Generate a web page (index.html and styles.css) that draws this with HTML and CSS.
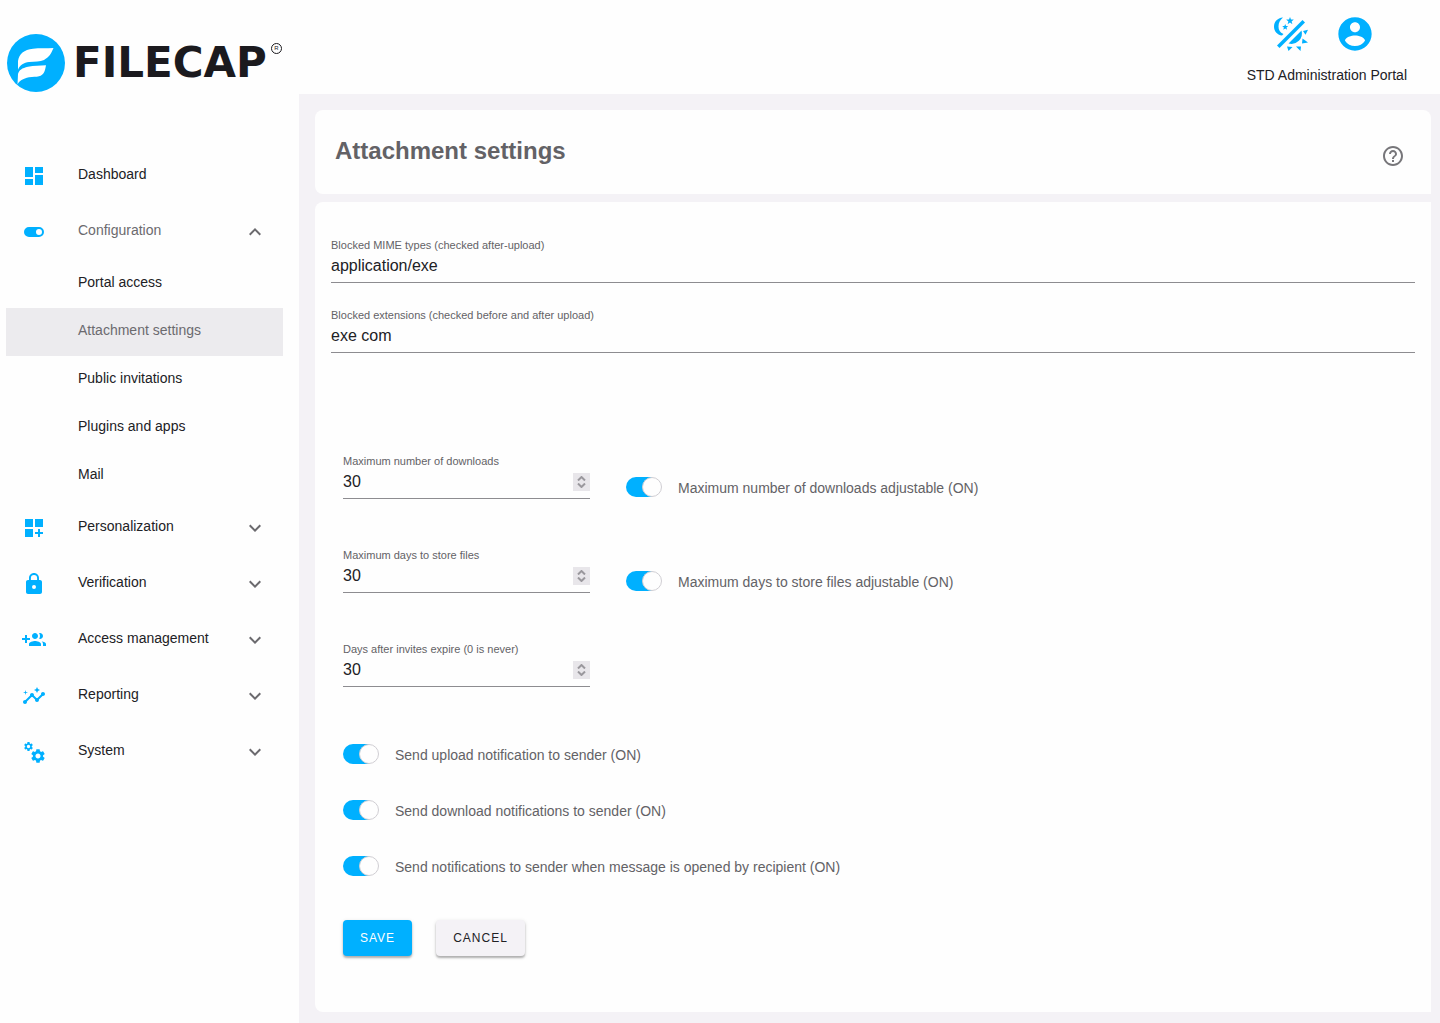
FILE: index.html
```html
<!DOCTYPE html>
<html lang="en">
<head>
    <meta charset="UTF-8">
    <meta name="viewport" content="width=device-width, initial-scale=1.0">
    <title>FileCap - Attachment settings</title>
    <link rel="stylesheet" href="styles.css">
</head>
<body>

<svg class="sprite" aria-hidden="true">
    <symbol id="down" viewBox="0 0 24 24"><path d="M7.41 8.59 12 13.17l4.59-4.58L18 10l-6 6-6-6z"/></symbol>
    <symbol id="up" viewBox="0 0 24 24"><path d="M7.41 15.41 12 10.83l4.59 4.58L18 14l-6-6-6 6z"/></symbol>
    <symbol id="gear" viewBox="0 0 24 24"><path d="M19.14 12.94c.04-.3.06-.61.06-.94 0-.32-.02-.64-.07-.94l2.03-1.58c.18-.14.23-.41.12-.61l-1.92-3.32c-.12-.22-.37-.29-.59-.22l-2.39.96c-.5-.38-1.03-.7-1.62-.94l-.36-2.54c-.04-.24-.24-.41-.48-.41h-3.84c-.24 0-.43.17-.47.41l-.36 2.54c-.59.24-1.13.57-1.62.94l-2.39-.96c-.22-.08-.47 0-.59.22L2.74 8.87c-.12.21-.08.47.12.61l2.03 1.58c-.05.3-.09.63-.09.94s.02.64.07.94l-2.03 1.58c-.18.14-.23.41-.12.61l1.92 3.32c.12.22.37.29.59.22l2.39-.96c.5.38 1.03.7 1.62.94l.36 2.54c.05.24.24.41.48.41h3.84c.24 0 .44-.17.47-.41l.36-2.54c.59-.24 1.13-.56 1.62-.94l2.39.96c.22.08.47 0 .59-.22l1.92-3.32c.12-.22.07-.47-.12-.61l-2.01-1.58zM12 15.6c-1.98 0-3.6-1.62-3.6-3.6s1.62-3.6 3.6-3.6 3.6 1.62 3.6 3.6-1.62 3.6-3.6 3.6z"/></symbol>
</svg>

<div class="layout">
    <aside class="sidebar">
        <a class="logo" href="#">
            <svg class="logo-mark" viewBox="0 0 58 58" aria-hidden="true">
                <circle cx="29" cy="29" r="29" fill="#00b0ff"/>
                <path fill="#fff" d="M46.500 14C40 14.500 32 14 26 14.700C17 15.500 12 20 11 27V35.700C13 31 17 28.500 22 28C28 27.500 33 28 37 26C42 23 44 20 46.500 14z"/>
                <path fill="#fff" d="M39 31.300C33 32 27 31.500 21 32.700C15 34 12 36 11 40L10.500 50.500C12 47 16 44.500 22 43.200C26 42.800 29 43 32 42.300C37 41 38 37 39 31.300z"/>
            </svg>
            <span class="logo-text">FILECAP</span>
            <span class="logo-reg">R</span>
        </a>

        <nav class="menu">
            <a class="item" href="#">
                <svg class="icon" viewBox="0 0 24 24"><path d="M3 13h8V3H3v10zm0 8h8v-6H3v6zm10 0h8V11h-8v10zm0-18v6h8V3h-8z"/></svg>
                <span class="label">Dashboard</span>
            </a>
            <button class="item open" type="button" aria-expanded="true">
                <svg class="icon" viewBox="0 0 24 24"><path fill-rule="evenodd" d="M7 7h10a5 5 0 0 1 0 10H7A5 5 0 0 1 7 7zm10 2a3 3 0 1 0 0 6 3 3 0 0 0 0-6z"/></svg>
                <span class="label">Configuration</span>
                <svg class="arrow"><use href="#up"/></svg>
            </button>
            <a class="subitem" href="#">Portal access</a>
            <a class="subitem active" href="#">Attachment settings</a>
            <a class="subitem" href="#">Public invitations</a>
            <a class="subitem" href="#">Plugins and apps</a>
            <a class="subitem" href="#">Mail</a>
            <button class="item" type="button">
                <svg class="icon" viewBox="0 0 24 24"><path d="M3 3h8v8H3zM13 3h8v8h-8zM3 13h8v8H3zM18 13h-2v3h-3v2h3v3h2v-3h3v-2h-3z"/></svg>
                <span class="label">Personalization</span>
                <svg class="arrow"><use href="#down"/></svg>
            </button>
            <button class="item" type="button">
                <svg class="icon" viewBox="0 0 24 24"><path fill-rule="evenodd" d="M18 8h-1V6c0-2.760-2.240-5-5-5S7 3.240 7 6v2H6c-1.100 0-2 .9-2 2v10c0 1.100.9 2 2 2h12c1.100 0 2-.9 2-2V10c0-1.100-.9-2-2-2zM8.900 8V6a3.100 3.100 0 0 1 6.200 0v2zM12 13a2 2 0 1 0 0 4 2 2 0 0 0 0-4z"/></svg>
                <span class="label">Verification</span>
                <svg class="arrow"><use href="#down"/></svg>
            </button>
            <button class="item" type="button">
                <svg class="icon" viewBox="0 0 24 24"><path d="M8 10H5V7H3v3H0v2h3v3h2v-3h3v-2zm10 1c1.660 0 2.990-1.340 2.990-3S19.660 5 18 5c-.32 0-.63.05-.91.14.57.81.9 1.790.9 2.860s-.34 2.040-.9 2.860c.28.09.59.14.91.14zm-5 0c1.660 0 2.990-1.340 2.990-3S14.660 5 13 5c-1.660 0-3 1.340-3 3s1.340 3 3 3zm6.620 2.160c.83.73 1.380 1.660 1.380 2.840v2h3v-2c0-1.540-2.370-2.490-4.380-2.840zM13 13c-2 0-6 1-6 3v2h12v-2c0-2-4-3-6-3z"/></svg>
                <span class="label">Access management</span>
                <svg class="arrow"><use href="#down"/></svg>
            </button>
            <button class="item" type="button">
                <svg class="icon" viewBox="0 0 24 24"><path d="M21 8c-1.450 0-2.260 1.440-1.930 2.510l-3.550 3.560c-.3-.09-.74-.09-1.040 0l-2.550-2.550C12.270 10.450 11.460 9 10 9c-1.450 0-2.270 1.440-1.930 2.520l-4.560 4.550C2.440 15.740 1 16.550 1 18c0 1.100.9 2 2 2 1.450 0 2.260-1.440 1.930-2.510l4.550-4.560c.3.09.74.09 1.040 0l2.550 2.550C12.730 16.550 13.540 18 15 18c1.450 0 2.270-1.440 1.930-2.520l3.560-3.550C21.560 12.260 23 11.450 23 10c0-1.100-.9-2-2-2zM15 9l.94-2.070L18 6l-2.060-.93L15 3l-.92 2.070L12 6l2.080.93zM3.500 11 4 9l2-.5L4 8l-.5-2L3 8l-2 .5L3 9z"/></svg>
                <span class="label">Reporting</span>
                <svg class="arrow"><use href="#down"/></svg>
            </button>
            <button class="item" type="button">
                <svg class="icon" viewBox="0 0 24 24"><use href="#gear" x="1" y="1" width="11" height="11"/><use href="#gear" x="7.500" y="7.500" width="17" height="17"/></svg>
                <span class="label">System</span>
                <svg class="arrow"><use href="#down"/></svg>
            </button>
        </nav>
    </aside>

    <div class="page">
        <header class="topbar">
            <div class="tools">
                <button class="tool" type="button" aria-label="Toggle dark mode">
                    <svg class="theme-icon" viewBox="0 0 34 34">
                        <path d="M9 .5C3 1 0 5 0 9.500C0 14 3 18 8 18.500L9.500 17C6 15.500 4.500 13 4.500 9.500C4.500 5.500 6 3 9 .5z"/>
                        <path d="M16 0l1 2.600h2.800l-2.200 1.800.8 2.800L16 5.600l-2.400 1.600.8-2.800-2.200-1.800H15z"/>
                        <path d="M11.200 7l.8 2.100h2.200l-1.700 1.400.6 2.200-1.900-1.200-1.900 1.200.6-2.200-1.700-1.400h2.200z"/>
                        <path d="M3 28.500 28.500 3 31 5.500 5.500 31z"/>
                        <path d="M14.500 26.500 27.500 13.500A10.500 10.500 0 0 1 14.500 26.500z"/>
                        <path d="M29 14l5-1.200-2.500 5zM28.500 21.500l5.500 4-6 1zM22 29.500h5L26.500 34zM13 29.500l5.500.5-4 4z"/>
                    </svg>
                </button>
                <button class="tool" type="button" aria-label="Account">
                    <svg class="account-icon" viewBox="0 0 24 24"><path fill-rule="evenodd" d="M12 2C6.480 2 2 6.480 2 12s4.480 10 10 10 10-4.480 10-10S17.520 2 12 2zm0 3c1.660 0 3 1.340 3 3s-1.340 3-3 3-3-1.340-3-3 1.340-3 3-3zm0 14.200c-2.500 0-4.710-1.280-6-3.220.03-1.990 4-3.080 6-3.080 1.990 0 5.970 1.090 6 3.080-1.290 1.940-3.500 3.220-6 3.220z"/></svg>
                </button>
            </div>
            <div class="portal">STD Administration Portal</div>
        </header>

        <main class="content">
            <section class="card head">
                <h1>Attachment settings</h1>
                <button class="help" type="button" aria-label="Help">
                    <svg viewBox="0 0 24 24"><path d="M11 18h2v-2h-2v2zm1-16C6.480 2 2 6.480 2 12s4.480 10 10 10 10-4.480 10-10S17.520 2 12 2zm0 18c-4.410 0-8-3.590-8-8s3.590-8 8-8 8 3.590 8 8-3.590 8-8 8zm0-14c-2.210 0-4 1.790-4 4h2c0-1.100.9-2 2-2s2 .9 2 2c0 2-3 1.750-3 5h2c0-2.250 3-2.500 3-5 0-2.210-1.790-4-4-4z"/></svg>
                </button>
            </section>

            <form class="card body">
                <div class="blocked">
                    <div class="field">
                        <label for="mime">Blocked MIME types (checked after-upload)</label>
                        <div class="control"><input type="text" id="mime" value="application/exe"></div>
                    </div>
                    <div class="field">
                        <label for="ext">Blocked extensions (checked before and after upload)</label>
                        <div class="control"><input type="text" id="ext" value="exe com"></div>
                    </div>
                </div>

                <div class="limits">
                    <div class="row">
                        <div class="field small">
                            <label for="downloads">Maximum number of downloads</label>
                            <div class="control">
                                <input type="number" id="downloads" min="0" value="30">
                                <div class="spinner">
                                    <button type="button" aria-label="More" onclick="step('downloads', 1)"><svg viewBox="0 0 9 5"><path d="M1 4.500 4.500 1 8 4.500"/></svg></button>
                                    <button type="button" aria-label="Less" onclick="step('downloads', -1)"><svg viewBox="0 0 9 5"><path d="M1 .5 4.500 4 8 .5"/></svg></button>
                                </div>
                            </div>
                        </div>
                        <label class="switch"><input type="checkbox" checked><span>Maximum number of downloads adjustable (ON)</span></label>
                    </div>
                    <div class="row">
                        <div class="field small">
                            <label for="days">Maximum days to store files</label>
                            <div class="control">
                                <input type="number" id="days" min="0" value="30">
                                <div class="spinner">
                                    <button type="button" aria-label="More" onclick="step('days', 1)"><svg viewBox="0 0 9 5"><path d="M1 4.500 4.500 1 8 4.500"/></svg></button>
                                    <button type="button" aria-label="Less" onclick="step('days', -1)"><svg viewBox="0 0 9 5"><path d="M1 .5 4.500 4 8 .5"/></svg></button>
                                </div>
                            </div>
                        </div>
                        <label class="switch"><input type="checkbox" checked><span>Maximum days to store files adjustable (ON)</span></label>
                    </div>
                    <div class="row">
                        <div class="field small">
                            <label for="invites">Days after invites expire (0 is never)</label>
                            <div class="control">
                                <input type="number" id="invites" min="0" value="30">
                                <div class="spinner">
                                    <button type="button" aria-label="More" onclick="step('invites', 1)"><svg viewBox="0 0 9 5"><path d="M1 4.500 4.500 1 8 4.500"/></svg></button>
                                    <button type="button" aria-label="Less" onclick="step('invites', -1)"><svg viewBox="0 0 9 5"><path d="M1 .5 4.500 4 8 .5"/></svg></button>
                                </div>
                            </div>
                        </div>
                    </div>
                </div>

                <div class="notifications">
                    <label class="switch"><input type="checkbox" checked><span>Send upload notification to sender (ON)</span></label>
                    <label class="switch"><input type="checkbox" checked><span>Send download notifications to sender (ON)</span></label>
                    <label class="switch"><input type="checkbox" checked><span>Send notifications to sender when message is opened by recipient (ON)</span></label>
                </div>

                <div class="actions">
                    <button class="btn save" type="button">SAVE</button>
                    <button class="btn cancel" type="button">CANCEL</button>
                </div>
            </form>
        </main>
    </div>
</div>

<script>
    function step(id, direction) {
        const input = document.getElementById(id);
        if (direction > 0) {
            input.stepUp();
        } else {
            input.stepDown();
        }
    }
</script>

</body>
</html>
```
FILE: styles.css
```css
*, *::before {
    box-sizing: border-box;
}
body {
    margin: 0;
    background: #fefefe;
    color: #212125;
    font-family: "Liberation Sans", Arial, Helvetica, sans-serif;
    font-size: 14px;
}
button, input {
    font-family: inherit;
    color: inherit;
}
button {
    padding: 0;
    border: none;
    background: none;
    cursor: pointer;
}
.sprite {
    display: none;
}
.layout {
    display: flex;
    min-height: 100vh;
}

/* sidebar */
.sidebar {
    flex: 0 0 299px;
    padding: 34px 16px 16px 6px;
}
.logo {
    display: flex;
    align-items: center;
    height: 58px;
    margin-bottom: 56px;
    padding-left: 1px;
    color: #1b1a1e;
    text-decoration: none;
}
.logo-mark {
    flex: none;
    width: 58px;
    height: 58px;
}
.logo-text {
    margin-left: 8px;
    font-family: "DejaVu Sans", Verdana, sans-serif;
    font-size: 42px;
    font-weight: bold;
    line-height: 58px;
}
.logo-reg {
    flex: none;
    align-self: flex-start;
    width: 11px;
    height: 11px;
    margin: 9px 0 0 4px;
    border: 1px solid #1b1a1e;
    border-radius: 50%;
    font-size: 6px;
    line-height: 9px;
    text-align: center;
}
.menu {
    display: flex;
    flex-direction: column;
}
.item {
    display: flex;
    align-items: center;
    gap: 32px;
    height: 56px;
    padding: 0 16px;
    font-size: 14px;
    text-align: left;
    text-decoration: none;
    color: #212125;
}
.item.open {
    color: #6b6a6e;
}
.icon {
    width: 24px;
    height: 24px;
    fill: #00b0ff;
}
.label {
    flex: 1;
    padding-bottom: 4px;
}
.arrow {
    width: 24px;
    height: 24px;
    fill: #6b6a6e;
}
.subitem {
    display: flex;
    align-items: center;
    height: 48px;
    padding: 0 16px 4px 72px;
    color: #212125;
    text-decoration: none;
}
.subitem.active {
    background: #ecebee;
    color: #6b6a6e;
}

/* top bar */
.page {
    flex: 1;
    min-width: 0;
    display: flex;
    flex-direction: column;
}
.topbar {
    display: flex;
    flex-direction: column;
    align-items: flex-end;
    gap: 12px;
    height: 94px;
    padding: 14px 33px 0 0;
}
.tools {
    display: flex;
    align-items: center;
    gap: 27px;
    margin-right: 32px;
}
.tool {
    display: flex;
    fill: #00b0ff;
}
.theme-icon {
    width: 34px;
    height: 34px;
}
.account-icon {
    width: 40px;
    height: 40px;
}
.portal {
    line-height: 18px;
}

/* content */
.content {
    flex: 1;
    display: flex;
    flex-direction: column;
    gap: 8px;
    padding: 16px 9px 11px 16px;
    background: #f4f2f6;
}
.card {
    background: #fefefe;
    border-radius: 8px;
}
.head {
    display: flex;
    align-items: center;
    justify-content: space-between;
    height: 84px;
    padding: 0 26px 0 20px;
    border-bottom-right-radius: 0;
}
.head h1 {
    margin: 0 0 2px;
    font-size: 24px;
    color: #636266;
}
.help {
    display: flex;
    margin-top: 8px;
}
.help svg {
    width: 24px;
    height: 24px;
    fill: #77767a;
}
.body {
    flex: 1;
    padding: 37px 16px 56px;
    border-top-right-radius: 0;
    border-bottom-right-radius: 0;
}
.blocked {
    display: flex;
    flex-direction: column;
    gap: 26px;
}
.field label {
    display: block;
    font-size: 11px;
    line-height: 12px;
    color: #636266;
}
.control {
    display: flex;
    height: 32px;
    border-bottom: 1px solid #8d8c90;
}
.control input {
    flex: 1;
    min-width: 0;
    height: 29px;
    padding: 0;
    border: none;
    outline: none;
    background: none;
    font-size: 16px;
    appearance: textfield;
}
.limits {
    display: flex;
    flex-direction: column;
    gap: 50px;
    padding: 102px 12px 0;
}
.row {
    display: flex;
    align-items: flex-end;
    gap: 36px;
}
.small {
    width: 247px;
}
.spinner {
    display: flex;
    flex-direction: column;
    align-items: center;
    justify-content: space-between;
    width: 17px;
    height: 18px;
    margin-top: 6px;
    padding: 3px 0;
    background: #e8e6ea;
}
.spinner button {
    display: flex;
}
.spinner svg {
    width: 9px;
    height: 5px;
    fill: none;
    stroke: #9a989d;
    stroke-width: 2;
}
.switch {
    display: flex;
    align-items: center;
    gap: 16px;
    height: 24px;
    color: #636266;
}
.switch span {
    padding-top: 2px;
}
.switch input {
    appearance: none;
    display: flex;
    width: 36px;
    height: 20px;
    margin: 0;
    border-radius: 10px;
    background: #d0ced3;
    cursor: pointer;
}
.switch input::before {
    content: "";
    width: 20px;
    height: 20px;
    border: 1px solid #d0ced3;
    border-radius: 50%;
    background: #fefefe;
}
.switch input:checked {
    justify-content: flex-end;
    background: linear-gradient(to right, #00b0ff 26px, transparent 26px);
}
.notifications {
    display: flex;
    flex-direction: column;
    gap: 32px;
    padding: 55px 12px 0;
}
.actions {
    display: flex;
    gap: 24px;
    padding: 42px 12px 0;
}
.btn {
    height: 36px;
    padding: 0 17px;
    border-radius: 4px;
    font-size: 12px;
    letter-spacing: 1px;
    box-shadow: 0 2px 2px rgba(0, 0, 0, 0.25), 0 1px 4px rgba(0, 0, 0, 0.12);
}
.save {
    background: #00b0ff;
    color: #fefefe;
}
.cancel {
    background: #f4f2f6;
}
```
